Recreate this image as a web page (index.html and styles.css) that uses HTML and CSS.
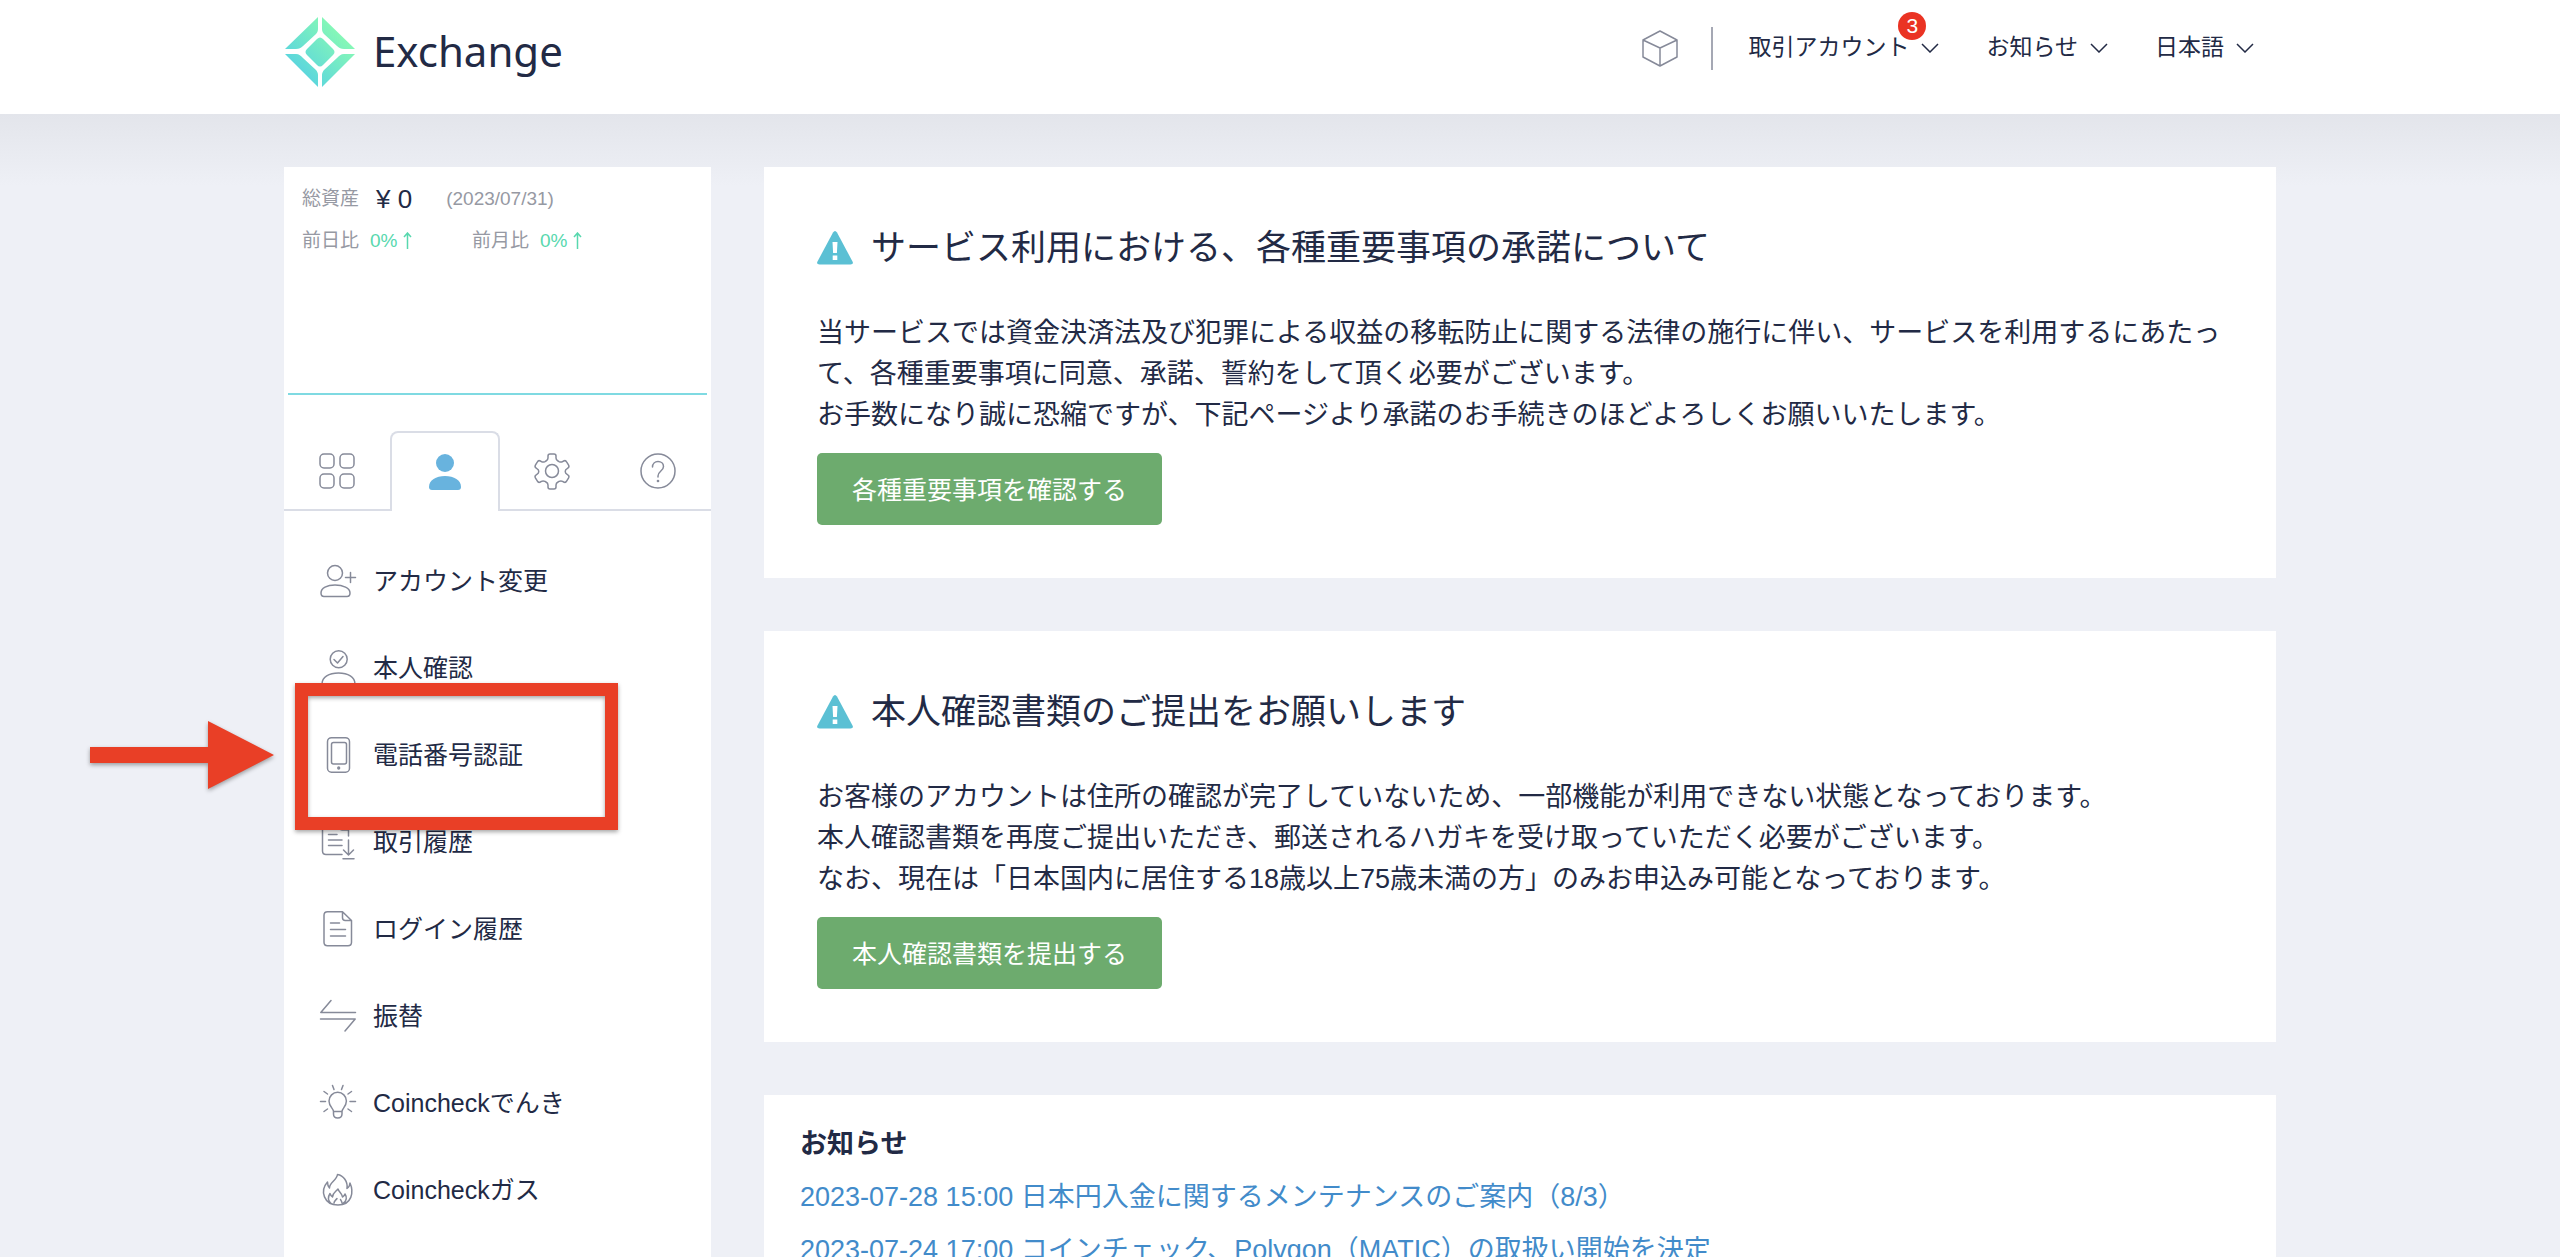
FILE: index.html
```html
<!DOCTYPE html>
<html lang="ja">
<head>
<meta charset="utf-8">
<title>Exchange</title>
<link rel="stylesheet" href="styles.css">
</head>
<body>
<header class="site-header">
  <div class="header-inner">
    <a class="brand" href="#">
      <svg class="brand-mark" viewBox="0 0 72 72" aria-hidden="true">
        <defs>
          <linearGradient id="mint" gradientUnits="userSpaceOnUse" x1="12" y1="54" x2="54" y2="14">
            <stop offset="0" stop-color="#5ad5de"/>
            <stop offset="1" stop-color="#86f8b6"/>
          </linearGradient>
        </defs>
        <g fill="url(#mint)">
          <path d="M34 1v12c0 2-1 4-2 5L19 30c-2 2-4 3-7 3H1z"/>
          <path d="M38 1v12c0 2 1 4 2 5l13 12c2 2 4 3 7 3h11z"/>
          <path d="M34 71V59c0-2-1-4-2-5L19 42c-2-2-4-4-7-4H1z"/>
          <path d="M38 71V59c0-2 1-4 2-5l13-12c2-2 4-4 7-4h11z"/>
          <path d="M33 23q3-3 6 0l10 10q3 3 0 6L39 49q-3 3-6 0L23 39q-3-3 0-6z"/>
        </g>
      </svg>
      <span class="brand-name">Exchange</span>
    </a>
    <nav class="header-nav">
      <a class="cube-link" href="#" aria-label="ブロック">
        <svg class="icon" viewBox="0 0 36 36" aria-hidden="true"><path d="M18 1l17 9v17l-17 9-17-9V10zM1 10l17 8 17-8M18 18v18"/></svg>
      </a>
      <span class="divider"></span>
      <button class="drop" type="button"><span class="drop-text">取引アカウント<span class="badge">3</span></span><svg class="chevron" viewBox="0 0 18 10" aria-hidden="true"><path d="M1 1l8 8 8-8"/></svg></button>
      <button class="drop" type="button"><span class="drop-text">お知らせ</span><svg class="chevron" viewBox="0 0 18 10" aria-hidden="true"><path d="M1 1l8 8 8-8"/></svg></button>
      <button class="drop" type="button"><span class="drop-text">日本語</span><svg class="chevron" viewBox="0 0 18 10" aria-hidden="true"><path d="M1 1l8 8 8-8"/></svg></button>
    </nav>
  </div>
</header>

<div class="layout">
  <aside class="sidebar">
    <section class="assets">
      <p class="asset-row"><span>総資産</span><strong class="amount">¥ 0</strong><span class="date">(2023/07/31)</span></p>
      <p class="asset-row change-row">
        <span class="change">前日比<span class="rate">0%<svg class="up" viewBox="0 0 9 18" aria-hidden="true"><path d="M4.500 17V1M1 5l3.500-4L8 5"/></svg></span></span>
        <span class="change">前月比<span class="rate">0%<svg class="up" viewBox="0 0 9 18" aria-hidden="true"><path d="M4.500 17V1M1 5l3.500-4L8 5"/></svg></span></span>
      </p>
      <div class="chart"></div>
    </section>

    <div class="tabs" role="tablist">
      <button class="tab" type="button" role="tab" aria-label="一覧"><svg class="icon" viewBox="0 0 36 36" aria-hidden="true"><rect x="1" y="1" width="14" height="14" rx="4"/><rect x="21" y="1" width="14" height="14" rx="4"/><rect x="1" y="21" width="14" height="14" rx="4"/><rect x="21" y="21" width="14" height="14" rx="4"/></svg></button>
      <button class="tab tab-active" type="button" role="tab" aria-selected="true" aria-label="アカウント"><svg class="icon icon-solid" viewBox="0 0 36 36" aria-hidden="true"><circle cx="18" cy="9" r="9"/><path d="M2 33c0-7 7-11 16-11s16 4 16 11q0 3-3 3H5q-3 0-3-3z"/></svg></button>
      <button class="tab" type="button" role="tab" aria-label="設定"><svg class="icon" viewBox="0 0 36 36" aria-hidden="true"><path d="M14 3q0-2 2-2h4q2 0 2 2v2q0 2 2 3l1 .6q2 1 3.600 0l1-.6q2-1 3 .8l2 3.400q1 2-.8 3l-1 .6q-1.500.8-1.500 2.400v.6q0 1.600 1.500 2.400l1 .6q1.800 1 .8 3l-2 3.400q-1 1.800-3 .8l-1-.6q-1.600-1-3.600 0l-1 .6q-2 1-2 3v2q0 2-2 2h-4q-2 0-2-2v-2q0-2-2-3l-1-.6q-2-1-3.600 0l-1 .6q-2 1-3-.8l-2-3.400q-1-2 .8-3l1-.6q1.500-.8 1.500-2.400v-.6q0-1.600-1.500-2.400l-1-.6q-1.800-1-.8-3l2-3.400q1-1.800 3-.8l1 .6q1.600 1 3.600 0l1-.6q2-1 2-3z"/><circle cx="18" cy="18" r="6.500"/></svg></button>
      <button class="tab" type="button" role="tab" aria-label="ヘルプ"><svg class="icon" viewBox="0 0 36 36" aria-hidden="true"><circle cx="18" cy="18" r="17"/><path d="M12.500 14c0-3.500 2.500-5.500 5.500-5.500s5.500 2 5.500 5c0 4.500-5.500 4.500-5.500 9.500v1"/><circle cx="18" cy="28" r=".6"/></svg></button>
    </div>

    <ul class="menu">
      <li><a class="menu-link" href="#"><svg class="icon" viewBox="0 0 36 36" aria-hidden="true"><circle cx="15" cy="10" r="7.500"/><path d="M1 30c0-5 6-8 14-8s15 3 15 8q0 3.500-3 3.500H4Q1 33.500 1 30zM30.500 9.500v10M25.500 14.500h10"/></svg><span class="menu-text">アカウント変更</span></a></li>
      <li><a class="menu-link" href="#"><svg class="icon" viewBox="0 0 36 36" aria-hidden="true"><circle cx="18.700" cy="9.300" r="8.500"/><path d="M14 9.500l3.500 3.500 5.500-6.500M2 34c0-7 7-11 16.500-11S35 27 35 34q0 2-2 2H4q-2 0-2-2z"/></svg><span class="menu-text">本人確認</span></a></li>
      <li class="menu-marked"><a class="menu-link" href="#"><svg class="icon" viewBox="0 0 36 36" aria-hidden="true"><rect x="7.500" y=".7" width="22" height="34.500" rx="4"/><rect x="11.500" y="5.500" width="15" height="21.500" rx="2"/><circle cx="18.700" cy="31" r=".9"/></svg><span class="menu-text">電話番号認証</span></a>
        <span class="mark-frame"></span>
        <svg class="mark-arrow" viewBox="0 0 184 68" aria-hidden="true"><path d="M0 26h118V0l66 34-66 34V42H0z"/></svg>
      </li>
      <li><a class="menu-link" href="#"><svg class="icon" viewBox="0 0 36 36" aria-hidden="true"><path d="M22 30.500H6q-3.500 0-3.500-3.500V-1q0-3.500 3.500-3.500h13l9.500 9.500v7M19.500-4v7q0 3 3 3h6M8.500 10.500H17M8.500 16H22M8.500 21.500H22M28.500 16v14M23.500 26l5 5 5-5M23 34.700h11"/></svg><span class="menu-text">取引履歴</span></a></li>
      <li><a class="menu-link" href="#"><svg class="icon" viewBox="0 0 36 36" aria-hidden="true"><path d="M22.500.8H7.500q-3.500 0-3.500 3.500v27q0 3.500 3.500 3.500h20.500q3.500 0 3.500-3.500V9.500zM22.500.8v6q0 2.700 2.700 2.700h6.300M10.500 12h9M10.500 18.500h15M10.500 25h15"/></svg><span class="menu-text">ログイン履歴</span></a></li>
      <li><a class="menu-link" href="#"><svg class="icon" viewBox="0 0 36 36" aria-hidden="true"><path d="M35.500 14.500H.8L11 2.500M.5 21h34.700L25 33"/></svg><span class="menu-text">振替</span></a></li>
      <li><a class="menu-link" href="#"><svg class="icon" viewBox="0 0 36 36" aria-hidden="true"><path d="M13.500 26.500c0-3-4.500-5-4.500-10.500a8.700 8.700 0 0 1 17.400 0c0 5.500-4.400 7.500-4.400 10.500zM13.500 26.500v2.500q0 4 4.200 4t4.300-4v-2.500M.5 16.500h5M30 16.500h5.500M4 6.500l3.500 2.500M31.500 6.500L28 9M4 26.500L7.500 24M31.500 26.500L28 24M12.500.5l1.500 4M23 .5l-1.500 4"/></svg><span class="menu-text">Coincheckでんき</span></a></li>
      <li><a class="menu-link" href="#"><svg class="icon" viewBox="0 0 36 36" aria-hidden="true"><path d="M17.500 2.500c6 1 10.500 7 9.500 14 2-1.500 3-3 3-5.500 4 9 2 22-12 22S-.5 19 7.500 10c0 2.500.5 4.500 2 6C9 11 17 8 17.500 2.500zM11 31.500c-3-3-3-7-1-10 .5 1.500 1 2.500 2.500 3.500 0-4 3-5 5.500-8 1 3.500 4 4 4.500 8 1-.5 2-1.500 2.500-3 2 3 2 7-2 9.500M14 31c0-2 2-3 3-4.500M22 31c0-1.500-1-2.500-1.500-3.500"/></svg><span class="menu-text">Coincheckガス</span></a></li>
    </ul>
  </aside>

  <main class="content">
    <section class="card notice">
      <h2 class="notice-title"><svg class="warning" viewBox="0 0 36 34" aria-hidden="true"><path class="warning-shape" d="M16 1.500q2-3 4 0l15.500 29q1.500 3-2 3h-31q-3.500 0-2-3z"/><path class="warning-sign" d="M15.500 11h5l-.6 11h-3.800zM15.700 24.500h4.600v4.500h-4.600z"/></svg>サービス利用における、各種重要事項の承諾について</h2>
      <p class="notice-text">当サービスでは資金決済法及び犯罪による収益の移転防止に関する法律の施行に伴い、サービスを利用するにあたって、各種重要事項に同意、承諾、誓約をして頂く必要がございます。<br>お手数になり誠に恐縮ですが、下記ページより承諾のお手続きのほどよろしくお願いいたします。</p>
      <button class="action" type="button">各種重要事項を確認する</button>
    </section>
    <section class="card notice">
      <h2 class="notice-title"><svg class="warning" viewBox="0 0 36 34" aria-hidden="true"><path class="warning-shape" d="M16 1.500q2-3 4 0l15.500 29q1.500 3-2 3h-31q-3.500 0-2-3z"/><path class="warning-sign" d="M15.500 11h5l-.6 11h-3.800zM15.700 24.500h4.600v4.500h-4.600z"/></svg>本人確認書類のご提出をお願いします</h2>
      <p class="notice-text">お客様のアカウントは住所の確認が完了していないため、一部機能が利用できない状態となっております。<br>本人確認書類を再度ご提出いただき、郵送されるハガキを受け取っていただく必要がございます。<br>なお、現在は「日本国内に居住する18歳以上75歳未満の方」のみお申込み可能となっております。</p>
      <button class="action" type="button">本人確認書類を提出する</button>
    </section>
    <section class="card news">
      <h3 class="news-title">お知らせ</h3>
      <ul class="news-list">
        <li><a href="#">2023-07-28 15:00 日本円入金に関するメンテナンスのご案内（8/3）</a></li>
        <li><a href="#">2023-07-24 17:00 コインチェック、Polygon（MATIC）の取扱い開始を決定</a></li>
      </ul>
    </section>
  </main>
</div>
</body>
</html>
```
FILE: styles.css
```css
* {
  box-sizing: border-box;
}

body {
  display: flex;
  flex-direction: column;
  height: 100vh;
  margin: 0;
  overflow: hidden;
  background: #eef0f6;
  color: #222a45;
  font-family: "Liberation Sans", "Noto Sans CJK JP", sans-serif;
  font-size: 27px;
}

h2, h3, p, ul {
  margin: 0;
  padding: 0;
}

ul {
  list-style: none;
}

a {
  color: inherit;
  text-decoration: none;
}

button {
  padding: 0;
  border: 0;
  background: none;
  color: inherit;
  font-family: inherit;
}

.icon {
  flex: none;
  width: 36px;
  height: 36px;
  overflow: visible;
  fill: none;
  stroke: #868a99;
  stroke-width: 1.5;
  stroke-linecap: round;
  stroke-linejoin: round;
}

.icon-solid {
  fill: #68b3de;
  stroke: none;
}

/* Header */

.site-header {
  flex: none;
  background: #fff;
}

.header-inner {
  display: flex;
  justify-content: space-between;
  align-items: flex-start;
  max-width: 1992px;
  height: 114px;
  margin: 0 auto;
  padding-top: 16px;
}

.brand {
  display: flex;
  align-items: flex-start;
  gap: 17px;
}

.brand-mark {
  width: 72px;
  height: 72px;
}

.brand-name {
  font-family: "Noto Sans", "Open Sans", sans-serif;
  font-size: 42px;
  line-height: 70px;
}

.header-nav {
  display: flex;
  align-items: center;
  height: 64px;
  padding-right: 22px;
}

.cube-link {
  display: flex;
}

.divider {
  width: 2px;
  height: 43px;
  margin: 0 35px 0 33px;
  background: #a5a8b4;
}

.drop {
  display: flex;
  align-items: center;
  gap: 12px;
  margin-right: 47px;
  font-size: 23px;
  line-height: 34px;
}

.drop:last-child {
  margin-right: 0;
}

.drop-text {
  position: relative;
  padding-bottom: 3px;
}

.badge {
  position: absolute;
  top: -18px;
  right: -17px;
  width: 28px;
  height: 28px;
  border-radius: 14px;
  background: #ea3323;
  color: #fff;
  font-size: 21px;
  line-height: 28px;
  text-align: center;
}

.chevron {
  width: 18px;
  height: 10px;
  fill: none;
  stroke: #222a45;
  stroke-width: 1.5;
}

/* Page columns */

.layout {
  display: flex;
  flex: 1;
  gap: 53px;
  width: 100%;
  min-height: 0;
  padding: 53px max(20px, calc(50% - 996px)) 0;
  background: linear-gradient(#e3e5eb, #eef0f6 72px);
}

.sidebar {
  flex: none;
  width: 427px;
  background: #fff;
}

.content {
  display: flex;
  flex: 1;
  flex-direction: column;
  gap: 53px;
  min-width: 0;
}

/* Asset summary */

.assets {
  padding-top: 11px;
}

.asset-row {
  display: flex;
  align-items: center;
  padding-left: 18px;
  color: #9699a3;
  font-size: 19px;
  line-height: 42px;
}

.amount {
  margin: 0 34px 0 17px;
  color: #222a45;
  font-size: 26px;
  font-weight: 400;
}

.change {
  display: flex;
  width: 170px;
}

.rate {
  display: flex;
  align-items: center;
  gap: 6px;
  margin-left: 11px;
  color: #58d8ae;
}

.up {
  width: 9px;
  height: 18px;
  fill: none;
  stroke: #58d8ae;
  stroke-width: 1.5;
}

.chart {
  height: 133px;
  margin: 0 4px;
  border-bottom: 2px solid #7fdae2;
}

/* Sidebar tabs */

.tabs {
  display: flex;
  margin-top: 36px;
  box-shadow: inset 0 -2px #dadde6;
}

.tab {
  display: flex;
  flex: 1;
  justify-content: center;
  align-items: center;
  height: 80px;
}

.tab-active {
  border: 2px solid #dadde6;
  border-bottom: 0;
  border-radius: 8px 8px 0 0;
  background: #fff;
}

/* Sidebar menu */

.menu {
  padding-top: 26px;
}

.menu-link {
  display: flex;
  align-items: center;
  gap: 17px;
  height: 87px;
  padding-left: 36px;
  font-size: 25px;
}

.menu-text {
  padding-bottom: 3px;
}

.menu-marked {
  position: relative;
}

.mark-frame {
  position: absolute;
  z-index: 1;
  top: -28px;
  left: 11px;
  width: 323px;
  height: 147px;
  border: 13px solid #e93f26;
  filter: drop-shadow(0 2px 2px rgba(0, 0, 0, 0.35));
}

.mark-arrow {
  position: absolute;
  top: 10px;
  left: -194px;
  width: 184px;
  height: 68px;
  overflow: visible;
  fill: #e93f26;
  filter: drop-shadow(0 2px 2px rgba(0, 0, 0, 0.35));
}

/* Cards */

.card {
  flex: none;
  background: #fff;
}

.notice {
  padding: 53px;
}

.notice-title {
  display: flex;
  align-items: center;
  gap: 18px;
  margin-bottom: 37px;
  font-size: 35px;
  font-weight: 400;
  line-height: 56px;
}

.warning {
  width: 36px;
  height: 34px;
}

.warning-shape {
  fill: #5bc0d4;
}

.warning-sign {
  fill: #fff;
}

.notice-text {
  margin-bottom: 17px;
  line-height: 41px;
}

.action {
  display: block;
  height: 72px;
  padding: 0 35px 3px;
  border-radius: 5px;
  background: #6dab6e;
  color: #fff;
  font-size: 25px;
}

.news {
  flex: 1 0 auto;
  padding: 22px 36px;
}

.news-title {
  font-size: 27px;
  line-height: 54px;
}

.news-list {
  color: #428bca;
  line-height: 53px;
}
```
